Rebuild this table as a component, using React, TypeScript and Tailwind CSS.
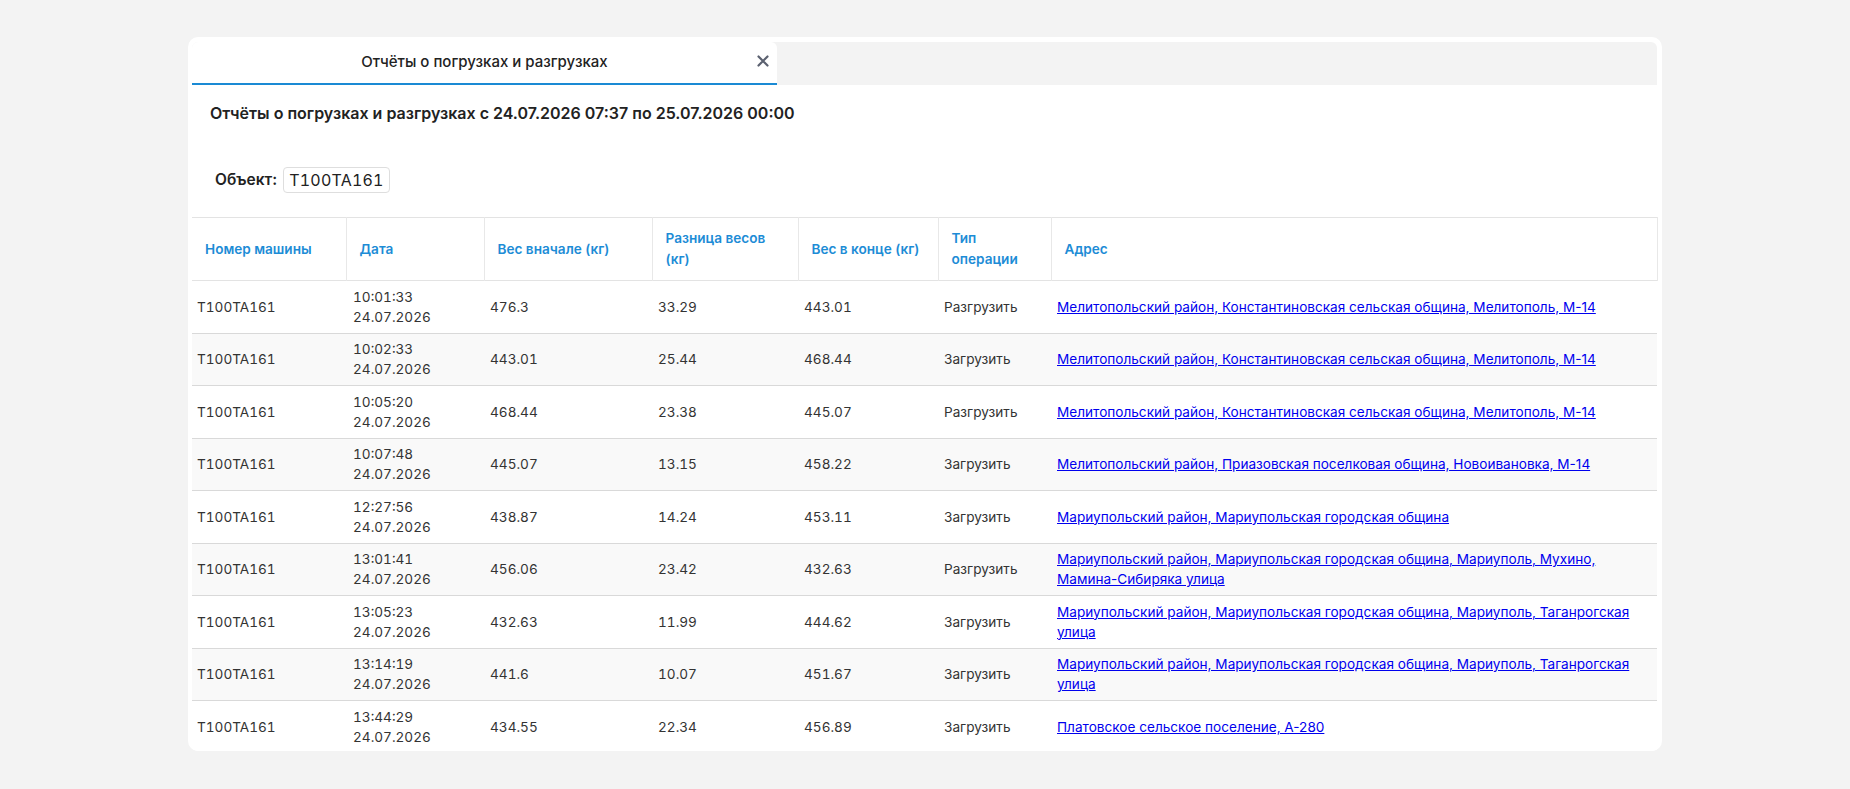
import React from 'react';

type Row = {
  car: string;
  time: string;
  date: string;
  start: string;
  diff: string;
  end: string;
  op: string;
  address: string;
};

const rows: Row[] = [
  { car: 'T100TA161', time: '10:01:33', date: '24.07.2026', start: '476.3', diff: '33.29', end: '443.01', op: 'Разгрузить', address: 'Мелитопольский район, Константиновская сельская община, Мелитополь, М-14' },
  { car: 'T100TA161', time: '10:02:33', date: '24.07.2026', start: '443.01', diff: '25.44', end: '468.44', op: 'Загрузить', address: 'Мелитопольский район, Константиновская сельская община, Мелитополь, М-14' },
  { car: 'T100TA161', time: '10:05:20', date: '24.07.2026', start: '468.44', diff: '23.38', end: '445.07', op: 'Разгрузить', address: 'Мелитопольский район, Константиновская сельская община, Мелитополь, М-14' },
  { car: 'T100TA161', time: '10:07:48', date: '24.07.2026', start: '445.07', diff: '13.15', end: '458.22', op: 'Загрузить', address: 'Мелитопольский район, Приазовская поселковая община, Новоивановка, М-14' },
  { car: 'T100TA161', time: '12:27:56', date: '24.07.2026', start: '438.87', diff: '14.24', end: '453.11', op: 'Загрузить', address: 'Мариупольский район, Мариупольская городская община' },
  { car: 'T100TA161', time: '13:01:41', date: '24.07.2026', start: '456.06', diff: '23.42', end: '432.63', op: 'Разгрузить', address: 'Мариупольский район, Мариупольская городская община, Мариуполь, Мухино, Мамина-Сибиряка улица' },
  { car: 'T100TA161', time: '13:05:23', date: '24.07.2026', start: '432.63', diff: '11.99', end: '444.62', op: 'Загрузить', address: 'Мариупольский район, Мариупольская городская община, Мариуполь, Таганрогская улица' },
  { car: 'T100TA161', time: '13:14:19', date: '24.07.2026', start: '441.6', diff: '10.07', end: '451.67', op: 'Загрузить', address: 'Мариупольский район, Мариупольская городская община, Мариуполь, Таганрогская улица' },
  { car: 'T100TA161', time: '13:44:29', date: '24.07.2026', start: '434.55', diff: '22.34', end: '456.89', op: 'Загрузить', address: 'Платовское сельское поселение, А-280' },
];

const headers = ['Номер машины', 'Дата', 'Вес вначале (кг)', 'Разница весов (кг)', 'Вес в конце (кг)', 'Тип операции', 'Адрес'];

export default function App() {
  return (
    <div className="min-h-[789px] bg-[#f3f3f3] pt-[37px] pb-[38px] font-['Inter',sans-serif] text-[#333]">
      <div className="mx-auto w-[1474px] h-[714px] overflow-hidden rounded-[10px] bg-white px-[4px] pt-[5px]">
        <div className="flex h-[43px] rounded-t-[6px] bg-[#f3f3f3] mr-[1px]">
          <div className="relative flex w-[585px] items-center justify-center rounded-tl-[6px] rounded-tr-[6px] border-b-2 border-[#1a8ad4] bg-white">
            <span className="text-[15px] font-medium text-[#222]">Отчёты о погрузках и разгрузках</span>
            <svg className="absolute right-[8px] top-[13px]" width="12" height="12" viewBox="0 0 12 12">
              <path d="M1.5 1.5 L10.5 10.5 M10.5 1.5 L1.5 10.5" stroke="#5b6170" strokeWidth="2.2" strokeLinecap="round" />
            </svg>
          </div>
        </div>

        <h1 className="mt-[16px] pl-[18px] text-[16px] leading-[24px] font-semibold text-[#222]">
          Отчёты о погрузках и разгрузках с 24.07.2026 07:37 по 25.07.2026 00:00
        </h1>

        <div className="mt-[42px] flex items-center gap-[6px] pl-[23px]">
          <span className="text-[15.5px] font-semibold text-[#222]">Объект:</span>
          <span className="flex h-[26px] items-center rounded-[4px] border border-[#dedede] px-[5px] text-[16px] tabular-nums tracking-[0.2px] text-[#222]">T100TA161</span>
        </div>

        <table className="mt-[24px] w-[1465px] table-fixed border-collapse text-[13.6px]">
          <colgroup>
            <col className="w-[154px]" />
            <col className="w-[138px]" />
            <col className="w-[168px]" />
            <col className="w-[146px]" />
            <col className="w-[140px]" />
            <col className="w-[113px]" />
            <col className="w-[606px]" />
          </colgroup>
          <thead>
            <tr className="h-[63px] border-t border-b border-[#e3e3e3]">
              {headers.map((h) => (
                <th key={h} className="border-r border-[#e8e8e8] pl-[13px] pr-[10px] text-left align-middle leading-[21px] font-semibold text-[#1d8cd6]">
                  {h}
                </th>
              ))}
            </tr>
          </thead>
          <tbody>
            {rows.map((r, i) => (
              <tr key={i} className={`h-[52.5px] border-b border-[#d9d9d9] ${i % 2 === 1 ? 'bg-[#f9f9f9]' : 'bg-white'}`}>
                <td className="pl-[5px] align-middle leading-[20px] tabular-nums">{r.car}</td>
                <td className="pl-[7px] align-middle leading-[20px] tabular-nums">
                  <div>{r.time}</div>
                  <div>{r.date}</div>
                </td>
                <td className="pl-[6px] align-middle leading-[20px] tabular-nums">{r.start}</td>
                <td className="pl-[6px] align-middle leading-[20px] tabular-nums">{r.diff}</td>
                <td className="pl-[6px] align-middle leading-[20px] tabular-nums">{r.end}</td>
                <td className="pl-[6px] align-middle leading-[20px]">{r.op}</td>
                <td className="pl-[6px] pr-[20px] align-middle leading-[20px]">
                  <a href="#" className="text-[#0000ee] underline">{r.address}</a>
                </td>
              </tr>
            ))}
          </tbody>
        </table>
      </div>
    </div>
  );
}
